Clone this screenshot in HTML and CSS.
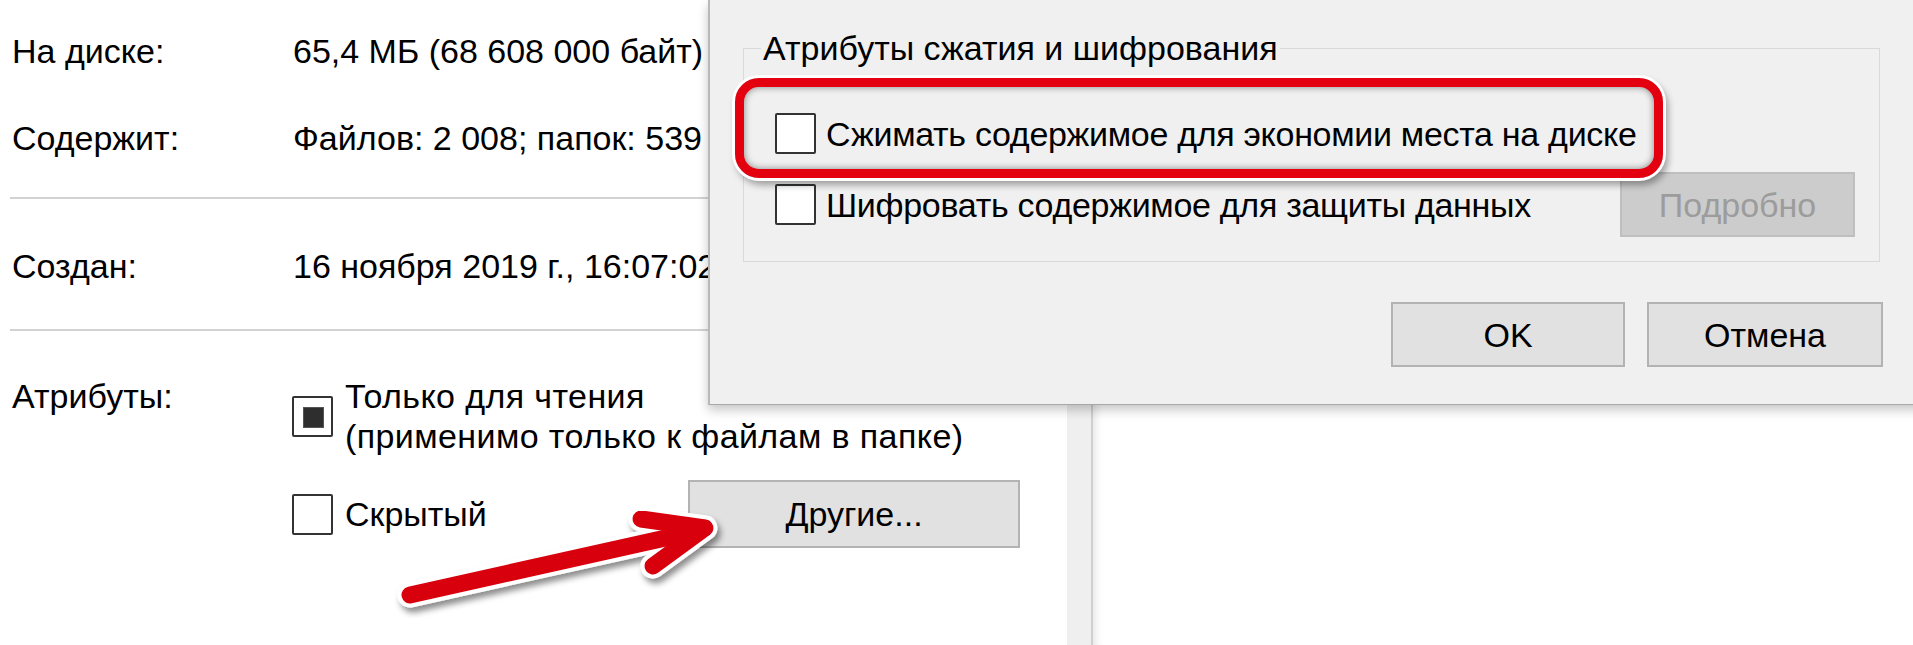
FILE: index.html
```html
<!DOCTYPE html>
<html lang="ru">
<head>
<meta charset="utf-8">
<title>Свойства</title>
<link rel="stylesheet" href="styles.css">
</head>
<body>
<div class="screen">
  <div class="win-left">
    <div class="props">
      <div class="row"><span class="lbl">На диске:</span><span class="val">65,4 МБ (68 608 000 байт)</span></div>
      <div class="row r2"><span class="lbl">Содержит:</span><span class="val">Файлов: 2 008; папок: 539</span></div>
      <div class="sep s1"></div>
      <div class="row r3"><span class="lbl">Создан:</span><span class="val">16 ноября 2019 г., 16:07:02</span></div>
      <div class="sep s2"></div>
      <div class="row r4">
        <span class="lbl">Атрибуты:</span>
        <div class="attr-list">
          <div class="attr">
            <span class="cb cb-mixed"></span>
            <span class="attr-text wide">Только для чтения<br>(применимо только к файлам в папке)</span>
          </div>
          <div class="attr attr2">
            <div class="attr-hidden">
              <span class="cb"></span>
              <span class="attr-text">Скрытый</span>
            </div>
            <div class="btn btn-other">Другие...</div>
          </div>
        </div>
      </div>
    </div>
  </div>
  <div class="strip"></div>
  <div class="win-right"></div>

  <div class="dialog">
    <fieldset class="group">
      <legend>Атрибуты сжатия и шифрования</legend>
      <div class="opt">
        <span class="cb"></span>
        <span class="opt-text">Сжимать содержимое для экономии места на диске</span>
      </div>
      <div class="opt opt2">
        <span class="cb"></span>
        <span class="opt-text">Шифровать содержимое для защиты данных</span>
        <div class="btn btn-details">Подробно</div>
      </div>
    </fieldset>
    <div class="actions">
      <div class="btn btn-ok">OK</div>
      <div class="btn btn-cancel">Отмена</div>
    </div>
  </div>

  <div class="highlight"></div>

  <svg class="arrow" width="1913" height="645" viewBox="0 0 1913 645">
    <defs>
      <filter id="sh" x="-10%" y="-10%" width="130%" height="140%">
        <feDropShadow dx="3" dy="5" stdDeviation="3" flood-color="#000" flood-opacity="0.45"/>
      </filter>
    </defs>
    <g filter="url(#sh)">
      <g fill="none" stroke="#fff" stroke-width="25" stroke-linecap="round" stroke-linejoin="round">
        <path d="M410 595 L688 533"/>
        <path d="M641 519 L705 528 L653 566"/>
      </g>
      <g fill="none" stroke="#d8000c" stroke-width="17" stroke-linecap="round" stroke-linejoin="round">
        <path d="M410 595 L688 533"/>
        <path d="M641 519 L705 528 L653 566"/>
      </g>
    </g>
  </svg>
</div>
</body>
</html>
```

FILE: styles.css
```css
* { box-sizing: border-box; }
html, body { margin: 0; padding: 0; background: #fff; }
body {
  font-family: "Liberation Sans", Arial, sans-serif;
  font-size: 34px;
  line-height: 40px;
  color: #000;
}
.screen {
  position: relative;
  width: 1913px;
  height: 645px;
  overflow: hidden;
  display: flex;
}

/* left properties window */
.win-left {
  width: 1067px;
  flex: 0 0 1067px;
  background: #fff;
}
.props { padding: 31px 0 0 12px; }
.row { display: flex; white-space: nowrap; }
.lbl { width: 281px; flex: 0 0 281px; }
.r2 { margin-top: 47px; }
.sep {
  height: 2px;
  background: #d2d2d2;
  margin-left: -2px;
  margin-right: 20px;
}
.s1 { margin-top: 39px; }
.r3 { margin-top: 47px; }
.s2 { margin-top: 43px; }
.r4 { margin-top: 45px; }

.attr-list { display: flex; flex-direction: column; margin-left: -1px; }
.attr { display: flex; align-items: center; gap: 12px; }
.attr-text.wide { letter-spacing: 0.4px; }
.attr2 { margin-top: 24px; gap: 0; }
.attr-hidden { display: flex; align-items: center; gap: 12px; width: 396px; }

.cb {
  display: inline-block;
  width: 41px;
  height: 41px;
  flex: 0 0 41px;
  border: 2px solid #333;
  border-radius: 2px;
  background: #fff;
  position: relative;
}
.cb-mixed::after {
  content: "";
  position: absolute;
  left: 9px; top: 9px;
  width: 19px; height: 19px;
  background: #2e2e2e;
  border: 1px solid #555;
}

.btn {
  display: flex;
  align-items: center;
  justify-content: center;
  background: #e1e1e1;
  border: 2px solid #b3b3b3;
}
.btn-other { width: 332px; height: 68px; }

.strip {
  width: 26px;
  flex: 0 0 26px;
  background: #efefef;
  border-right: 2px solid #cfcfcf;
}
.win-right {
  flex: 1;
  background: #fff;
  box-shadow: inset 10px 0 10px -8px rgba(0,0,0,0.12);
}

/* dialog window */
.dialog {
  position: absolute;
  left: 708px;
  top: 0;
  width: 1240px;
  height: 405px;
  background: #f0f0f0;
  border-left: 2px solid #b9b9b9;
  border-bottom: 1px solid #a8a8a8;
  box-shadow: 0 5px 10px rgba(0,0,0,0.22);
  padding: 28px 0 0 33px;
}
.group {
  margin: 0;
  width: 1137px;
  border: 1px solid #d9d9d9;
  padding: 45px 24px 24px 18px;
}
.group legend {
  padding: 0 2px;
  margin-left: -1px;
  line-height: 40px;
}
.opt { display: flex; align-items: center; gap: 10px; margin-left: 13px; white-space: nowrap; }
.opt-text { letter-spacing: -0.3px; }
.opt2 { margin-top: 18px; }
.btn-details {
  margin-left: auto;
  width: 235px;
  height: 65px;
  background: #cccccc;
  border-color: #bfbfbf;
  color: #9c9c9c;
}
.actions {
  margin-top: 40px;
  width: 1140px;
  display: flex;
  justify-content: flex-end;
  gap: 22px;
}
.btn-ok { width: 234px; height: 65px; }
.btn-cancel { width: 236px; height: 65px; }

/* annotation overlays */
.highlight {
  position: absolute;
  left: 735px;
  top: 78px;
  width: 928px;
  height: 100px;
  border: 9px solid #e3000f;
  border-radius: 24px;
  box-shadow:
    inset 0 0 7px rgba(0,0,0,0.45),
    0 0 0 3px #fff,
    3px 5px 7px 2px rgba(0,0,0,0.35);
}
.arrow {
  position: absolute;
  left: 0;
  top: 0;
  pointer-events: none;
}
```
